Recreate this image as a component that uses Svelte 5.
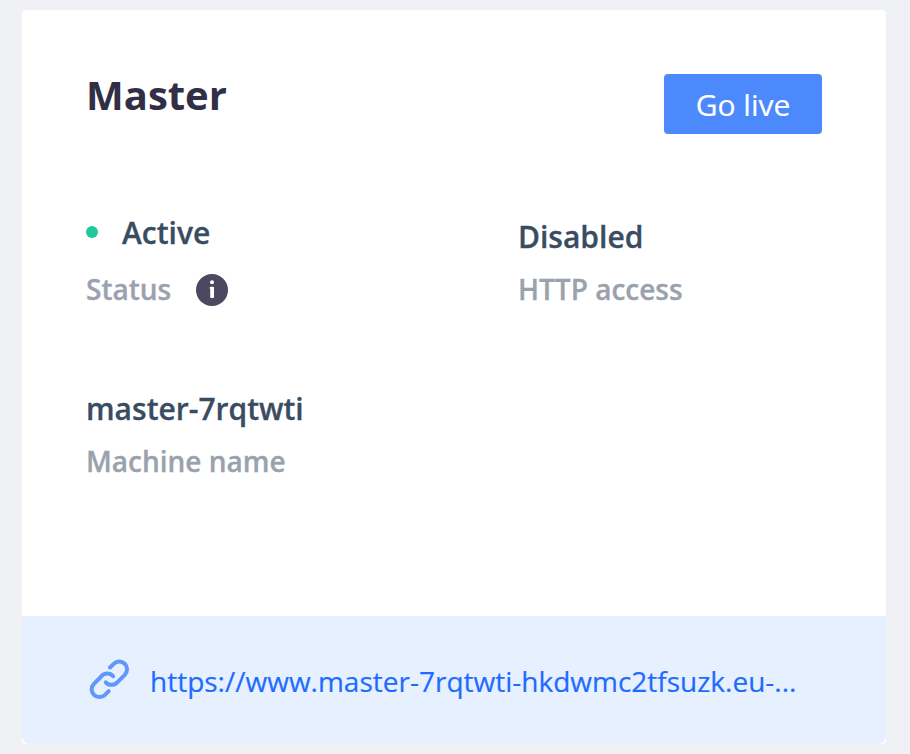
<script>
  const machine = 'master-7rqtwti';
  const url = 'https://www.master-7rqtwti-hkdwmc2tfsuzk.eu-...';
</script>

<main>
  <article>
    <header>
      <h1>Master</h1>
      <button>Go live</button>
    </header>
    <div class="grid">
      <div class="item status">
        <div class="value"><i class="dot"></i><span>Active</span></div>
        <div class="label">
          <span>Status</span>
          <svg width="32" height="32" viewBox="0 0 32 32" aria-hidden="true">
            <circle cx="16" cy="16" r="16" fill="#4b485f" />
            <circle cx="16" cy="8.2" r="2" fill="#fff" />
            <path d="M15 12.8h2q1 0 1 1v9.3q0 1-1 1h-1.8q-1 0-1-1v-8.4q-.6-.1-.6-.9 0-1 1.4-1z" fill="#fff" />
          </svg>
        </div>
      </div>
      <div class="item">
        <div class="value"><span>Disabled</span></div>
        <div class="label"><span>HTTP access</span></div>
      </div>
      <div class="item">
        <div class="value"><span>{machine}</span></div>
        <div class="label"><span>Machine name</span></div>
      </div>
    </div>
    <footer>
      <svg width="41" height="41" viewBox="0 0 41 41" fill="none" stroke="#6097fb" stroke-width="4" stroke-linecap="round" stroke-linejoin="round" aria-hidden="true">
        <path d="M21 8.5 24.7 4.8A7.8 7.8 0 0 1 35.8 15.8L28.5 23.1A7.8 7.8 0 0 1 16.8 23.3" />
        <path d="M19.7 32.1 16 35.8A7.8 7.8 0 0 1 4.9 24.8L12.2 17.5A7.8 7.8 0 0 1 24.2 17.3" />
      </svg>
      <span class="link">{url}</span>
    </footer>
  </article>
</main>

<style>
  :global(body) { background: #f0f1f5; }
  main {
    box-sizing: border-box;
    height: 754px;
    padding: 10px 24px 10px 22px;
    font-family: "Open Sans", "Noto Sans", sans-serif;
  }
  article {
    display: flex;
    flex-direction: column;
    height: 734px;
    background: #fff;
    border-radius: 4px;
    overflow: hidden;
  }
  header {
    display: flex;
    justify-content: space-between;
    padding: 64px 64px 0;
    height: 60px;
  }
  h1 {
    margin: 0;
    font-size: 40px;
    line-height: 42px;
    font-weight: 700;
    color: #312f46;
  }
  button {
    width: 158px;
    height: 60px;
    padding: 2px 0 0;
    border: 0;
    border-radius: 4px;
    background: #4b89fc;
    color: #fff;
    font: 400 30px/58px "Open Sans", sans-serif;
    -webkit-text-stroke: 0.2px;
  }
  .grid {
    display: grid;
    grid-template-columns: 432px 1fr;
    grid-template-rows: 172px 172px;
    padding: 78px 0 0 64px;
    flex: 1;
  }
  .value {
    display: flex;
    align-items: center;
    height: 48px;
    font-size: 30px;
    font-weight: 600;
    color: #394c62;
    -webkit-text-stroke: 0.3px;
  }
  .label {
    display: flex;
    align-items: center;
    height: 32px;
    margin-top: 14px;
    gap: 25px;
    font-size: 28px;
    font-weight: 600;
    color: #99a2ad;
    -webkit-text-stroke: 0.3px;
  }
  .label span { padding-bottom: 2px; }
  .status .value { height: 40px; gap: 24px; }
  .status .label { margin-top: 22px; }
  .dot { width: 12px; height: 12px; border-radius: 50%; background: #1fc99c; }
  footer {
    display: flex;
    align-items: center;
    height: 128px;
    padding: 0 67px;
    gap: 20px;
    background: #e6f0ff;
    border-radius: 0 0 8px 8px;
  }
  footer svg { margin-bottom: 1px; }
  .link {
    padding-top: 2px;
    font-size: 28px;
    color: #1f6bff;
    white-space: nowrap;
    -webkit-text-stroke: 0.2px;
  }
</style>
